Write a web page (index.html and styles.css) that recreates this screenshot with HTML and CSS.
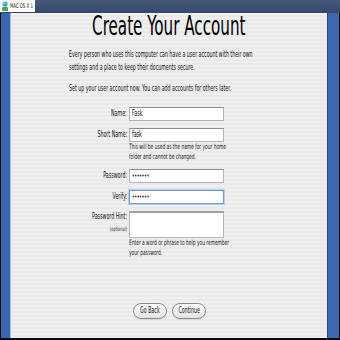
FILE: index.html
```html
<!DOCTYPE html>
<html>
<head>
<meta charset="utf-8">
<link rel="stylesheet" href="styles.css">
</head>
<body>
<div class="screen">
  <div class="topbar">
    <div class="tab">
      <svg class="tab-icon" width="8" height="10" viewBox="0 0 8 10">
        <circle cx="4" cy="3" r="2.6" fill="#3aa4d8"/>
        <path d="M1 10 L1 6.5 Q4 4.5 7 6.5 L7 10 Z" fill="#4cae5a"/>
        <circle cx="3.2" cy="2.4" r="0.9" fill="#bfe6f7"/>
      </svg>
      <span class="tab-text n">MAC OS X 1</span>
    </div>
  </div>
  <div class="main">
    <div class="lstripe"></div>
    <div class="content">
      <div class="title-wrap"><h1 class="title">Create Your Account</h1></div>
      <div class="intro">
        <p><span class="ln">Every person who uses this computer can have a user account with their own</span><span class="ln">settings and a place to keep their documents secure.</span></p>
        <p><span class="ln">Set up your user account now. You can add accounts for others later.</span></p>
      </div>
      <div class="form">
        <div class="row">
          <span class="label"><span class="nr">Name:</span></span>
          <div class="field"><div class="input"><span class="n">Fask</span></div></div>
        </div>
        <div class="row">
          <span class="label"><span class="nr">Short Name:</span></span>
          <div class="field"><div class="input"><span class="n">fask</span></div>
            <p class="help"><span class="ln">This will be used as the name for your home</span><span class="ln">folder and cannot be changed.</span></p>
          </div>
        </div>
        <div class="row">
          <span class="label"><span class="nr">Password:</span></span>
          <div class="field"><div class="input dots"><span class="n">•••••••</span></div></div>
        </div>
        <div class="row">
          <span class="label"><span class="nr">Verify:</span></span>
          <div class="field"><div class="input dots focus"><span class="n">•••••••</span></div></div>
        </div>
        <div class="row">
          <span class="label hint"><span class="nr">Password Hint:</span><span class="nr opt">(optional)</span></span>
          <div class="field"><div class="input area"></div>
            <p class="help"><span class="ln">Enter a word or phrase to help you remember</span><span class="ln">your password.</span></p>
          </div>
        </div>
      </div>
      <div class="buttons">
        <button class="btn"><span class="nc">Go Back</span></button>
        <button class="btn"><span class="nc">Continue</span></button>
      </div>
    </div>
    <div class="rstripe"></div>
  </div>
</div>
</body>
</html>
```
FILE: styles.css
```css
html, body { margin: 0; padding: 0; }
body { background: #000; font-family: "DejaVu Sans Condensed", "DejaVu Sans", sans-serif; }
.screen { width: 340px; height: 340px; background: #0a0a0a; display: flex; flex-direction: column; overflow: hidden; }
.topbar { height: 13px; background: linear-gradient(#485a7c, #35476a); position: relative; flex: none; }
.tab { position: absolute; left: 0; top: 0; width: 35px; height: 12px; background: #fff; display: flex; align-items: center; gap: 1px; padding-left: 1px; box-sizing: border-box; overflow: hidden; }
.tab-icon { flex: none; }
.tab-text { font-size: 6.5px; color: #111; }

/* narrow text helpers */
.n, .nr, .nc, .ln { white-space: nowrap; }
.n { display: inline-block; transform: scaleX(0.66); transform-origin: left center; }
.nr { display: inline-block; transform: scaleX(0.66); transform-origin: right center; }
.nc { display: inline-block; transform: scaleX(0.66); transform-origin: center center; }
.ln { display: block; transform: scaleX(0.655); transform-origin: left center; }

.main { flex: 1; display: flex; padding: 0 1px 2px 1px; min-height: 0; }
.lstripe { width: 9px; background: #3c67b0; border-right: 1px solid #a5bbe0; }
.rstripe { flex: 1; background: #3d68b0; border-left: 1px solid #24467f; }
.content { width: 316px; background: repeating-linear-gradient(#f0f0f0 0 2px, #e9e9e9 2px 4px); display: flex; flex-direction: column; color: #111; }

.title-wrap { text-align: center; padding-top: 1px; height: 24px; }
.title { display: inline-block; margin: 0; font-weight: normal; font-size: 27px; line-height: 24px; color: #000; transform: scaleX(0.625); transform-origin: center center; white-space: nowrap; }

.intro { padding: 10px 0 0 58px; font-size: 8px; line-height: 13px; }
.intro p { margin: 0 0 8px 0; }
.intro p:last-child { margin-bottom: 0; }

.form { display: flex; flex-direction: column; padding-top: 12px; }
.row { display: grid; grid-template-columns: 116px 95px; column-gap: 2px; margin-bottom: 7px; }
.label { text-align: right; font-size: 8px; line-height: 14px; }
.label.hint { display: flex; flex-direction: column; align-items: flex-end; line-height: 12px; }
.opt { font-size: 6px; color: #333; }
.input { height: 14px; box-sizing: border-box; background: #fff; border: 1px solid #b4b4b4; border-top-color: #8c8c8c; font-size: 8px; line-height: 12px; padding-left: 2px; color: #000; overflow: hidden; }
.input.dots { font-size: 7px; }
.input.focus { border-color: #6f9ad4; box-shadow: 0 0 0 1px #b7cdec; }
.input.area { height: 27px; border-top: 2px solid #a0a0a0; }
.help { margin: 0; font-size: 7.4px; line-height: 10px; color: #222; }

.buttons { margin-top: auto; margin-bottom: 19px; display: flex; justify-content: center; gap: 5px; padding-left: 1px; }
.btn { width: 34px; height: 16px; padding: 0; border-radius: 8px; border: 1px solid #8a8a8a; background: linear-gradient(#fdfdfd, #e2e2e2); font-family: inherit; font-size: 8px; line-height: 12px; color: #111; box-shadow: 0 1px 0 rgba(0,0,0,0.08); }
```
